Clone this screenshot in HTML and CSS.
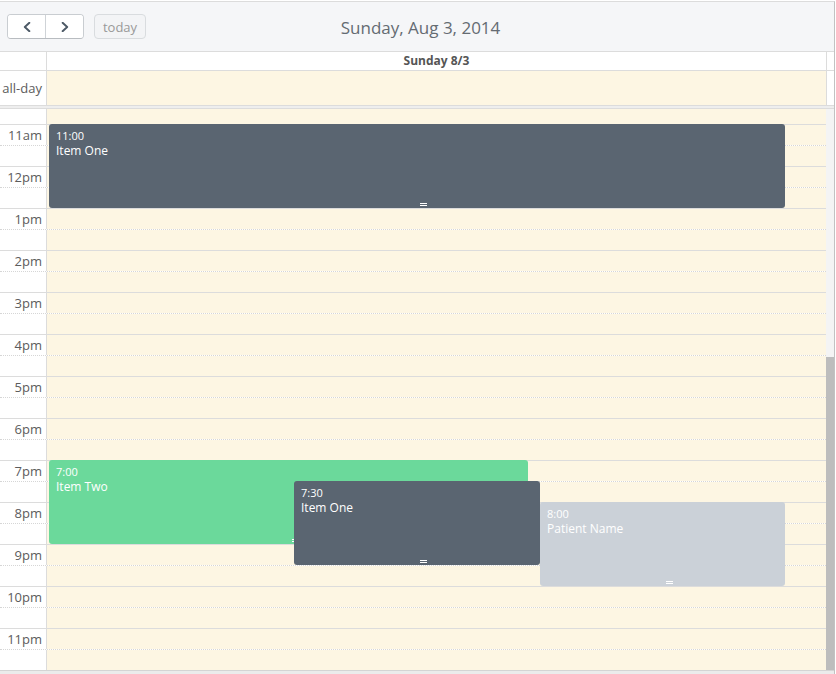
FILE: index.html
```html
<!DOCTYPE html>
<html>
<head>
<meta charset="utf-8">
<link rel="stylesheet" href="styles.css">
</head>
<body>
<div class="cal">
  <div class="toolbar">
    <div class="tb-left">
      <div class="btn-group">
        <button class="btn nav"><svg width="8" height="10" viewBox="0 0 8 10"><polyline points="6.4,0.8 1.8,5 6.4,9.2" fill="none" stroke="#4c5966" stroke-width="1.9" stroke-linecap="round" stroke-linejoin="round"/></svg></button>
        <button class="btn nav"><svg width="8" height="10" viewBox="0 0 8 10"><polyline points="1.6,0.8 6.2,5 1.6,9.2" fill="none" stroke="#4c5966" stroke-width="1.9" stroke-linecap="round" stroke-linejoin="round"/></svg></button>
      </div>
      <button class="btn today">today</button>
    </div>
    <h2 class="title">Sunday, Aug 3, 2014</h2>
    <div class="tb-right"></div>
  </div>

  <div class="head">
    <div class="axis"></div>
    <div class="day-head">Sunday 8/3</div>
    <div class="gutter"></div>
  </div>

  <div class="allday">
    <div class="axis allday-label">all-day</div>
    <div class="day-cell"></div>
    <div class="gutter"></div>
  </div>

  <div class="divider"></div>

  <div class="body">
    <div class="scroller">
      <div class="slats">
        <div class="slot half"><div class="axis-cell"></div><div class="slot-cell"></div></div>
        <div class="slot hour"><div class="axis-cell">11am</div><div class="slot-cell"></div></div>
        <div class="slot half"><div class="axis-cell"></div><div class="slot-cell"></div></div>
        <div class="slot hour"><div class="axis-cell">12pm</div><div class="slot-cell"></div></div>
        <div class="slot half"><div class="axis-cell"></div><div class="slot-cell"></div></div>
        <div class="slot hour"><div class="axis-cell">1pm</div><div class="slot-cell"></div></div>
        <div class="slot half"><div class="axis-cell"></div><div class="slot-cell"></div></div>
        <div class="slot hour"><div class="axis-cell">2pm</div><div class="slot-cell"></div></div>
        <div class="slot half"><div class="axis-cell"></div><div class="slot-cell"></div></div>
        <div class="slot hour"><div class="axis-cell">3pm</div><div class="slot-cell"></div></div>
        <div class="slot half"><div class="axis-cell"></div><div class="slot-cell"></div></div>
        <div class="slot hour"><div class="axis-cell">4pm</div><div class="slot-cell"></div></div>
        <div class="slot half"><div class="axis-cell"></div><div class="slot-cell"></div></div>
        <div class="slot hour"><div class="axis-cell">5pm</div><div class="slot-cell"></div></div>
        <div class="slot half"><div class="axis-cell"></div><div class="slot-cell"></div></div>
        <div class="slot hour"><div class="axis-cell">6pm</div><div class="slot-cell"></div></div>
        <div class="slot half"><div class="axis-cell"></div><div class="slot-cell"></div></div>
        <div class="slot hour"><div class="axis-cell">7pm</div><div class="slot-cell"></div></div>
        <div class="slot half"><div class="axis-cell"></div><div class="slot-cell"></div></div>
        <div class="slot hour"><div class="axis-cell">8pm</div><div class="slot-cell"></div></div>
        <div class="slot half"><div class="axis-cell"></div><div class="slot-cell"></div></div>
        <div class="slot hour"><div class="axis-cell">9pm</div><div class="slot-cell"></div></div>
        <div class="slot half"><div class="axis-cell"></div><div class="slot-cell"></div></div>
        <div class="slot hour"><div class="axis-cell">10pm</div><div class="slot-cell"></div></div>
        <div class="slot half"><div class="axis-cell"></div><div class="slot-cell"></div></div>
        <div class="slot hour"><div class="axis-cell">11pm</div><div class="slot-cell"></div></div>
        <div class="slot half"><div class="axis-cell"></div><div class="slot-cell"></div></div>

        <div class="events">
          <div class="event slate" style="left:2px;top:21px;width:736px;height:84px">
            <div class="ev-time">11:00</div>
            <div class="ev-title">Item One</div>
            <div class="resizer"></div>
          </div>
          <div class="event green" style="left:2px;top:357px;width:479px;height:84px">
            <div class="ev-time">7:00</div>
            <div class="ev-title">Item Two</div>
            <div class="resizer"></div>
          </div>
          <div class="event slate" style="left:247px;top:378px;width:246px;height:84px">
            <div class="ev-time">7:30</div>
            <div class="ev-title">Item One</div>
            <div class="resizer"></div>
          </div>
          <div class="event grey" style="left:493px;top:399px;width:245px;height:84px">
            <div class="ev-time">8:00</div>
            <div class="ev-title">Patient Name</div>
            <div class="resizer"></div>
          </div>
        </div>
      </div>
    </div>
    <div class="scrollbar">
      <div class="sb-space"></div>
      <div class="sb-thumb"></div>
    </div>
  </div>

  <div class="bottom"></div>
</div>
</body>
</html>
```

FILE: styles.css
```css
* { box-sizing: border-box; }

html, body {
  margin: 0;
  padding: 0;
  background: #fff;
}

body {
  padding-top: 1px;
  font-family: "Open Sans", "Noto Sans", sans-serif;
  color: #555;
}

.cal {
  width: 835px;
  border-top: 1px solid #dcdcdc;
  border-right: 1px solid #c2c2c2;
}

/* toolbar */
.toolbar {
  height: 50px;
  background: #f5f6f8;
  border-bottom: 1px solid #dcdcdc;
  display: grid;
  grid-template-columns: 1fr auto 1fr;
  align-items: center;
  padding: 0 0 0 7px;
}

.tb-left {
  display: flex;
  align-items: center;
  gap: 10px;
}

.btn-group {
  display: flex;
  border: 1px solid #c9cdd1;
  border-bottom-color: #b8bcc0;
  border-radius: 4px;
  background: #fff;
  overflow: hidden;
}

.btn {
  font-family: "Open Sans", sans-serif;
  height: 25px;
  margin: 0;
  padding: 0;
  display: flex;
  align-items: center;
  justify-content: center;
}

.nav {
  width: 37px;
  height: 23px;
  border: none;
  background: #fff;
}

.nav + .nav {
  border-left: 1px solid #cfd3d7;
  width: 38px;
}

.today {
  width: 52px;
  border: 1px solid #d9dcdf;
  border-radius: 4px;
  background: #f3f4f6;
  color: #999;
  font-size: 13px;
}

.title {
  margin: 0;
  padding-top: 2px;
  font-size: 17px;
  font-weight: 400;
  color: #646b72;
  line-height: 23px;
}

/* header */
.head {
  display: flex;
  height: 19px;
  border-bottom: 1px solid #dcdcdc;
  background: #fff;
}

.axis {
  width: 47px;
  border-right: 1px solid #dcdcdc;
  flex: none;
}

.day-head {
  width: 780px;
  border-right: 1px solid #dcdcdc;
  text-align: center;
  font-size: 12px;
  font-weight: 700;
  line-height: 18px;
  color: #555;
}

.gutter {
  width: 7px;
  flex: none;
  background: #fff;
}

/* all-day */
.allday {
  display: flex;
  height: 34px;
}

.allday-label {
  font-size: 13px;
  line-height: 34px;
  text-align: right;
  padding-right: 4px;
  color: #5c5c5c;
}

.day-cell {
  width: 780px;
  background: #fdf6e3;
  border-right: 1px solid #dcdcdc;
}

.divider {
  height: 4px;
  border-top: 1px solid #dcdcdc;
  border-bottom: 1px solid #dcdcdc;
  background: #eeeeee;
}

/* time grid */
.body {
  display: flex;
  height: 561px;
}

.scroller {
  width: 826px;
  height: 561px;
  overflow: hidden;
}

.slats {
  position: relative;
  margin-top: -6px;
}

.slot {
  display: flex;
  height: 21px;
}

.slot.hour { border-top: 1px solid #dcdcdc; }
.slot.half { border-top: 1px dotted #d6d6d6; }

.axis-cell {
  width: 47px;
  flex: none;
  border-right: 1px solid #dcdcdc;
  background: #fff;
  text-align: right;
  padding-right: 4px;
  font-size: 13px;
  line-height: 20px;
  color: #5c5c5c;
}

.slot-cell {
  flex: 1;
  background: #fdf6e3;
}

.events {
  position: absolute;
  left: 47px;
  top: 0;
  width: 779px;
  height: 100%;
}

.event {
  position: absolute;
  border-radius: 3px;
  color: #fff;
  padding: 5px 6px 0 7px;
  overflow: hidden;
}

.event.slate { background: #5a6571; }
.event.green { background: #6bd99b; }
.event.grey  { background: #cbd1d8; }

.ev-time {
  font-size: 11px;
  line-height: 14px;
}

.ev-title {
  font-size: 12px;
  line-height: 15px;
}

.resizer {
  position: absolute;
  left: calc(50% + 3px);
  bottom: 2px;
  width: 7px;
  height: 3px;
  border-top: 1px solid #fff;
  border-bottom: 1px solid #fff;
}

/* scrollbar */
.scrollbar {
  width: 8px;
  height: 561px;
  display: flex;
  flex-direction: column;
  background: #f4f4f4;
}

.sb-space {
  height: 248px;
  flex: none;
}

.sb-thumb {
  flex: 1;
  background: #bdbdbd;
}

.bottom {
  height: 4px;
  border-top: 1px solid #d4d4d4;
  background: #ebebeb;
}
```
